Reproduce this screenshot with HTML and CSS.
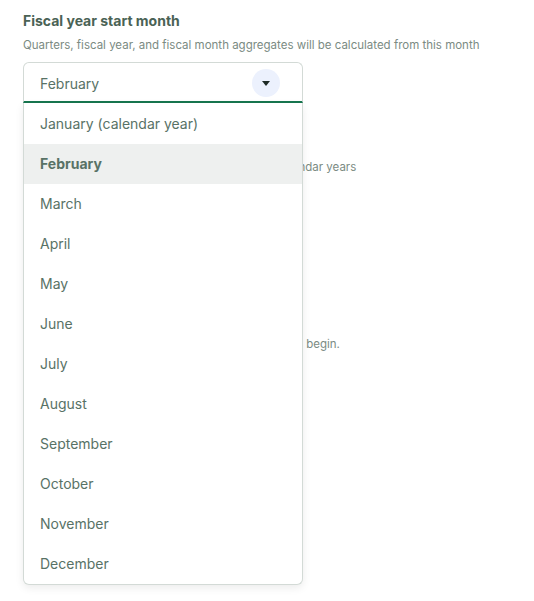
FILE: index.html
```html
<!DOCTYPE html>
<html lang="en">
<head>
    <meta charset="UTF-8">
    <meta name="viewport" content="width=device-width, initial-scale=1.0">
    <title>Fiscal year settings</title>
    <link rel="stylesheet" href="styles.css">
</head>
<body>
    <div class="field">
        <h2>Fiscal year start month</h2>
        <p class="hint">Quarters, fiscal year, and fiscal month aggregates will be calculated from this month</p>
        <div class="select open">
            <div class="select-box">
                <span class="value">February</span>
                <span class="arrow">
                    <svg width="8" height="5" viewBox="0 0 8 5"><path d="M0 0h8L4 5z" fill="#1e2b26"/></svg>
                </span>
            </div>
            <ul class="menu">
                <li>January (calendar year)</li>
                <li class="active">February</li>
                <li>March</li>
                <li>April</li>
                <li>May</li>
                <li>June</li>
                <li>July</li>
                <li>August</li>
                <li>September</li>
                <li>October</li>
                <li>November</li>
                <li>December</li>
            </ul>
        </div>
    </div>

    <!-- settings below sit under the open menu -->
    <p class="hint under first">Name fiscal years by the year they end in, like calendar years</p>
    <p class="hint under second">Choose the first day from which all your reports will begin.</p>
</body>
</html>
```

FILE: styles.css
```css
html {
    height: 100%;
}
body {
    margin: 0;
    padding: 12px 23px;
    min-height: 100%;
    box-sizing: border-box;
    font-family: Inter, "Open Sans", sans-serif;
    background-color: #fff;
    color: #587266;
}
h2 {
    margin: 0;
    font-size: 14px;
    font-weight: 700;
    color: #4a6255;
    line-height: 18px;
}
.hint {
    margin: 7px 0 9px;
    font-size: 11.5px;
    line-height: 16px;
    color: #7b8b83;
}
.hint.first {
    margin-top: 56px;
}
.hint.second {
    margin-top: 161px;
}
.select {
    position: relative;
    width: 280px;
}
.select-box {
    height: 38px;
    border: 1px solid #d3dad6;
    border-bottom: 2px solid #17764f;
    border-radius: 6px 6px 0 0;
    display: flex;
    align-items: center;
    justify-content: space-between;
}
.value {
    padding-left: 16px;
    padding-top: 2px;
    font-size: 14px;
    color: #587266;
}
.arrow {
    width: 28px;
    height: 28px;
    margin-right: 22px;
    margin-top: 2px;
    border-radius: 50%;
    background-color: #ecf1fd;
    display: flex;
    align-items: center;
    justify-content: center;
}
.menu {
    position: absolute;
    top: 41px;
    left: 0;
    right: 0;
    margin: 0;
    padding: 1px 0 0;
    list-style: none;
    background-color: #fff;
    border: 1px solid #d3dad6;
    border-top: none;
    border-radius: 0 0 6px 6px;
    box-shadow: 0 3px 8px rgba(0, 0, 0, 0.08);
    z-index: 10;
}
.menu li {
    height: 40px;
    line-height: 40px;
    padding-left: 16px;
    font-size: 14px;
    color: #587266;
}
.menu li.active {
    background-color: #eef0ef;
    font-weight: 700;
}
```
